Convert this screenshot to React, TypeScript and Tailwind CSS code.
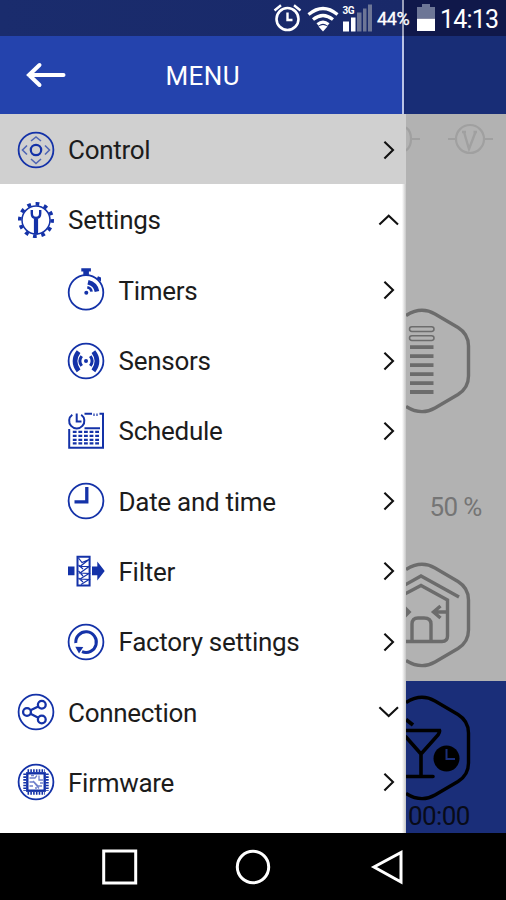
import type { ReactNode } from "react";

const BLUE = "#1432a8";

function Icon({ children }: { children: ReactNode }) {
  return (
    <svg
      className="h-11 w-11 shrink-0"
      viewBox="-22 -22 44 44"
      fill="none"
      stroke={BLUE}
      strokeWidth="1.8"
    >
      {children}
    </svg>
  );
}

const ControlIcon = () => (
  <Icon>
    <circle r="17.4" />
    <circle r="5.2" strokeWidth="2.2" />
    <g stroke="#5066b4" strokeWidth="1.6">
      <path d="M-5-9 0-13 5-9M-5 9 0 13.5 5 9M-9-4.5-13.5 0-9 4.5M9-4.5 13.5 0 9 4.5" />
    </g>
  </Icon>
);

const SettingsIcon = () => (
  <Icon>
    <circle r="14" strokeWidth="1.5" />
    <circle r="16.2" strokeWidth="3.6" strokeDasharray="3.7 4.782" transform="rotate(-3)" />
    <path d="M0-1V14.5" strokeWidth="4.2" />
    <path d="M-4.2-10V-6.5Q-4.2-2.2 0-2 4.2-2.2 4.2-6.5V-10" strokeWidth="2.4" />
  </Icon>
);

const TimersIcon = () => (
  <Icon>
    <circle cy="2.4" r="17.3" />
    <path d="M-4.7-21.8H4.9V-18.5H2.9V-15H-2.7V-18.5H-4.7ZM12-13.8 15-12.4V-8.4L10.8-11.6Z" fill={BLUE} stroke="none" />
    <circle cx="0.3" cy="2.8" r="2" fill={BLUE} stroke="none" />
    <path d="M1.3-2.7Q5-1.9 5.6 1.6" strokeWidth="2.6" />
    <path d="M2-7.7Q9.7-5.8 11 1.5" strokeWidth="4.6" />
  </Icon>
);

const SensorsIcon = () => (
  <Icon>
    <circle r="17.4" />
    <circle r="2" fill={BLUE} stroke="none" />
    <path d="M-4.3-4.9Q-8 0-4.3 4.9M4.3-4.9Q8 0 4.3 4.9" strokeWidth="3" />
    <path d="M-7.4-9.4Q-14.6 0-7.4 9.9M7.4-9.4Q14.6 0 7.4 9.9" strokeWidth="4.6" />
  </Icon>
);

const ScheduleIcon = () => (
  <Icon>
    <path d="M-16.8-2V16.8H17V-17.3H13.5M-1.5-17.3H6M-1.5-2.7H14" strokeWidth="2" />
    <path d="M8-17.5V-15M11-17.5V-15" strokeWidth="1.2" />
    <path d="M-13.7-16.3A7.6 7.6 0 1 0-4.8-16.3" strokeWidth="2" />
    <path d="M-9.3-17.5V-9.5H-4.5" strokeWidth="2" />
    <g strokeDasharray="3.8 1.8" strokeWidth="2.3">
      <path d="M-13.2.8H14M-13.2 4.8H14M-13.2 8.8H14M-13.2 12.4H14" />
    </g>
  </Icon>
);

const ClockIcon = () => (
  <Icon>
    <circle r="17.4" />
    <path d="M.8-14V.9H-11.5" strokeWidth="3.3" />
  </Icon>
);

const FilterIcon = () => (
  <Icon>
    <path d="M-18-4.5H-11.5V4.3H-18ZM6-4.5H11.3V-9.5L18.7 0 11.3 9.5V4.3H6Z" fill={BLUE} stroke="none" />
    <path d="M-8.5-14.3H3.6V14.5H-8.5Z" strokeWidth="2" />
    <path d="M-7.5-13-4-8.5 3-11.5-6-4.5 3-4.5-6 2 3 2.5-6 8 3 8.5-5 13.5M-7.5-6-3-2M-7.5 0-3 5M-7.5 7-3 11" strokeWidth="1.2" />
  </Icon>
);

const FactoryIcon = () => (
  <Icon>
    <circle r="17.4" />
    <path d="M-10.2 1A10.3 10.3 0 1 1-4 9.6" strokeWidth="3" />
    <path d="M-10.7 4.7-2.7 5-7 11.5Z" fill={BLUE} stroke="none" />
  </Icon>
);

const ConnectionIcon = () => (
  <Icon>
    <circle r="17.4" />
    <g strokeWidth="2.3">
      <circle cx="-9" cy="0" r="3.9" />
      <circle cx="5.8" cy="-7.3" r="3.9" />
      <circle cx="5.8" cy="7.5" r="3.9" />
      <path d="M-5.5-1.7 2.3-5.5M-5.5 1.7 2.3 5.7" />
    </g>
  </Icon>
);

const FirmwareIcon = () => (
  <Icon>
    <circle r="17.4" />
    <rect x="-8.7" y="-8.7" width="17.4" height="17.4" strokeWidth="2.4" />
    <g strokeWidth="3" strokeDasharray="1.6 1.2">
      <path d="M-8.5-11.2H9M-8.5 11.2H9M-11.2-8.5V9M11.2-8.5V9" />
    </g>
    <path d="M-6.5-4H-1L1-6.5M-6.5 0H-2L2 4H6M-6.5 4H-3M3-6.5V-2H7M-3-1 3 6.5M-5-6.5H-2M4 1H7M-1 6H1" stroke="#6f80cc" strokeWidth="1.3" />
  </Icon>
);

type Dir = "right" | "up" | "down";
const chevrons: Record<Dir, string> = {
  right: "M-4.6-8.3 4 0-4.6 8.5",
  up: "M-9.6 4.4-.3-4.3 9 4.4",
  down: "M-9.6-4.8-.3 4 9-4.8",
};

type Item = { label: string; icon: ReactNode; dir?: Dir; sub?: boolean; active?: boolean };
const items: Item[] = [
  { label: "Control", icon: <ControlIcon />, active: true },
  { label: "Settings", icon: <SettingsIcon />, dir: "up" },
  { label: "Timers", icon: <TimersIcon />, sub: true },
  { label: "Sensors", icon: <SensorsIcon />, sub: true },
  { label: "Schedule", icon: <ScheduleIcon />, sub: true },
  { label: "Date and time", icon: <ClockIcon />, sub: true },
  { label: "Filter", icon: <FilterIcon />, sub: true },
  { label: "Factory settings", icon: <FactoryIcon />, sub: true },
  { label: "Connection", icon: <ConnectionIcon />, dir: "down" },
  { label: "Firmware", icon: <FirmwareIcon /> },
];

function Row({ label, icon, dir = "right", sub, active }: Item) {
  return (
    <div
      className={`flex h-[70.3px] shrink-0 items-center pt-px pr-[5px] ${sub ? "pl-16" : "pl-[13.5px]"} ${active ? "bg-[#d0d0d0]" : ""}`}
    >
      {icon}
      <span className="ml-[10.5px] grow pt-px text-[26px] leading-none tracking-[-0.28px] text-[#1c1c1c]">{label}</span>
      <svg className="h-6 w-6" viewBox="-12 -12 24 24" fill="none" stroke="#111" strokeWidth="2.1">
        <path d={chevrons[dir]} />
      </svg>
    </div>
  );
}

/* Rounded hexagon outline shared by the tiles of the main screen. */
const HEX = "M-15-45.5Q0-55 14-47L37-33.5Q47.5-27 47.5-15V15Q47.5 27 37 33.5L14 47Q0 55-15 45.5";

function Tile({ color, children }: { color: string; children: ReactNode }) {
  return (
    <svg className="h-[108px] w-[100px] shrink-0" viewBox="-15 -54 100 108" fill="none" stroke={color} strokeWidth="3.4">
      <path d={HEX} />
      {children}
    </svg>
  );
}

function StatusBar() {
  return (
    <div className="flex h-9 shrink-0 items-center bg-[linear-gradient(90deg,#1a2c6d_0,#192969_402px,#9a9fb8_402px,#9a9fb8_404px,#10184a_404px,#10184a_100%)] pl-[273px] text-white">
      <svg className="h-[30px] w-[29px]" viewBox="0 0 29 30" fill="none" stroke="#fff" strokeWidth="2.6">
        <circle cx="14.5" cy="16" r="11" />
        <path d="M14.5 9.5V17H19.5M1.5 7.5 8 2.2M21 2.2 27.5 7.5" strokeWidth="2.4" />
      </svg>
      <svg className="ml-[5px] h-[30px] w-[32px]" viewBox="0 0 32 30" fill="none" stroke="#fff" strokeWidth="3.2">
        <path d="M1.5 11.5Q16-.5 30.5 11.5M6 16.6Q16 8.4 26 16.6M10.5 21.4Q16 16.9 21.5 21.4" />
        <path d="M11.5 23.6Q16 20.4 20.5 23.6L16 28.5Z" fill="#fff" stroke="none" />
      </svg>
      <svg className="ml-[3px] h-[30px] w-[31px]" viewBox="0 0 31 30">
        <path d="M1 18.5H7V28.5H1ZM9 14.5H13.5V28.5H9Z" fill="#fff" />
        <path d="M15 9.5H19.5V28.5H15ZM21 5.5H24.5V28.5H21ZM26 1.5H30V28.5H26Z" fill="#6d7696" />
        <text x="0.5" y="10.5" fill="#fff" fontSize="10" fontWeight="700" fontFamily="Roboto, sans-serif" textLength="12">3G</text>
      </svg>
      <span className="ml-[4px] w-[34px] pt-[2px] text-[18px] leading-none tracking-[-0.4px] whitespace-nowrap [-webkit-text-stroke:0.3px_white]">44%</span>
      <svg className="ml-[6px] h-7 w-[18px]" viewBox="0 0 18 28">
        <path d="M5 0H13V3H18V14H0V3H5Z" fill="#6d7696" />
        <path d="M0 14.5H18V27H0Z" fill="#fff" />
      </svg>
      <span className="ml-[5px] pt-[2px] text-[25px] leading-none tracking-[-0.8px]">14:13</span>
    </div>
  );
}

function Drawer() {
  return (
    <div className="flex w-[406px] shrink-0 flex-col bg-[linear-gradient(90deg,#fff_0,#fff_402px,#c5c5c5_406px)]">
      <div className="flex h-[78px] shrink-0 items-center bg-[linear-gradient(90deg,#2443ad_0,#2443ad_402px,#b9c3e6_402px,#b9c3e6_404px,#182a72_404px)]">
        <svg className="ml-[26px] h-7 w-10" viewBox="0 0 40 28" fill="none" stroke="#fff" strokeWidth="4" strokeLinecap="round">
          <path d="M37.5 14H3M13.5 4 3 14 13.5 24" />
        </svg>
        <span className="ml-[99.5px] pt-px text-[26px] leading-none tracking-[0.4px] text-white">MENU</span>
      </div>
      {items.map((item) => (
        <Row key={item.label} {...item} />
      ))}
    </div>
  );
}

function MainScreen() {
  return (
    <div className="flex w-[100px] shrink-0 flex-col overflow-hidden bg-[#b2b2b2]">
      <div className="h-[78px] shrink-0 bg-[#182d76]" />
      <svg className="mt-[8px] h-9 w-[100px] shrink-0" viewBox="406 122 100 36" fill="none" stroke="#a0a0a0" strokeWidth="2.2">
        <path d="M406 127.5Q411 131 411 139 411 147 406 150.5M412 139H420M448 139H456M484 139H493" />
        <circle cx="470" cy="139" r="14" />
        <path d="M464 132 469 149 475.5 132M462 132H466M473.5 132H477" strokeWidth="2.4" />
      </svg>
      <div className="mt-[149px] shrink-0">
        <Tile color="#6c6c6c">
          <g strokeWidth="1.5">
            <rect x="-11.5" y="-34.3" width="24.5" height="4.8" rx="2.4" />
            <rect x="-11.5" y="-25.3" width="24.5" height="4.8" rx="2.4" />
          </g>
          <path d="M-11-13.8H12.5M-11-4.9H12.5M-11 4.1H12.5M-11 13.1H12.5M-11 22.1H12.5M-11 31H12.5" strokeWidth="3.8" />
        </Tile>
      </div>
      <span className="mt-[78px] ml-[23.5px] shrink-0 text-[26px] leading-[28px] tracking-[-0.6px] text-[#757575]">50 %</span>
      <div className="mt-[40px] shrink-0">
        <Tile color="#6c6c6c">
          <path d="M-17-29.5 0-39 38-18M-17-20.5 0-29.5 26.5-15V21Q26.5 26.5 21 26.5H-17" />
          <path d="M-9 26.5V9Q-9 3-3 3H3Q10 3 10 9V26.5" />
          <path d="M27-3H13M19.5-9 12.5-3 19.5 3" />
          <path d="M-15-8.5-9.5-3-15 2.5Z" fill="#6c6c6c" stroke="none" />
        </Tile>
      </div>
      <div className="mt-[12px] flex grow flex-col bg-[#1a2e79]">
        <div className="mt-[13px] h-[108px] shrink-0">
          <Tile color="#000">
            <path d="M-15-17.5H18.5Q19-16 17-13L0 6-15-11M0 6V28.5M-15 28.5H12" strokeWidth="3.6" strokeLinecap="round" />
            <path d="M-15-28.5-8-23" strokeWidth="3.8" />
            <circle cx="25.5" cy="10.5" r="13" fill="#000" stroke="none" />
            <path d="M25.5 1V11H34" stroke="#1a2e79" strokeWidth="2" />
          </Tile>
        </div>
        <span className="ml-[2px] pt-px text-[26px] leading-[26px] tracking-[-0.6px] text-[#080b18]">00:00</span>
      </div>
    </div>
  );
}

export default function App() {
  return (
    <div className="flex h-[900px] w-[506px] flex-col overflow-hidden bg-black font-['Roboto',sans-serif]">
      <StatusBar />
      <div className="flex h-[797px] shrink-0">
        <Drawer />
        <MainScreen />
      </div>
      <div className="flex grow items-center pl-[101px]">
        <svg className="h-10 w-[310px]" viewBox="101 847 310 40" fill="none" stroke="#fff" strokeWidth="3">
          <rect x="103.7" y="851" width="32" height="32" />
          <circle cx="253" cy="867" r="15.7" />
          <path d="M401 852.5V882L374 867Z" />
        </svg>
      </div>
    </div>
  );
}
